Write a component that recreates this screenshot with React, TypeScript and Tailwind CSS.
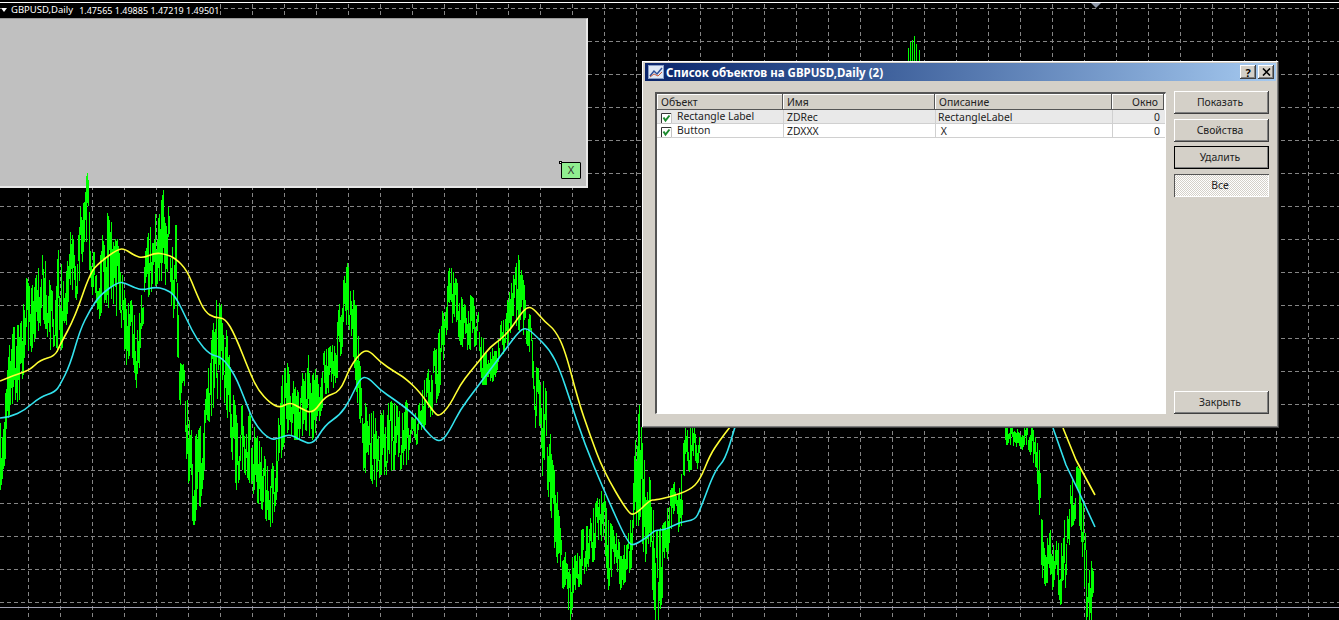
import { FC, ReactNode } from "react";

type Pt = [number, number];

// x, top, bottom of the price noise
const envelope: [number, number, number][] = [
    [0, 423, 490], [4, 405, 470], [9, 345, 415], [13, 327, 400], [18, 325, 403], [22, 320, 390], [25, 272, 345], [30, 290, 355],
    [36, 275, 335], [43, 252, 320], [50, 285, 350], [55, 300, 345], [58, 238, 355], [64, 290, 345], [70, 232, 285], [76, 240, 300],
    [82, 190, 262], [85, 150, 232], [89, 190, 270], [92, 240, 295], [98, 275, 322], [105, 205, 300], [109, 220, 310], [115, 225, 315],
    [120, 260, 320], [126, 305, 365], [131, 300, 350], [137, 330, 395], [141, 295, 340], [146, 240, 300], [152, 220, 290], [160, 205, 280],
    [165, 180, 285], [170, 225, 300], [176, 225, 335], [179, 340, 400], [184, 370, 425], [189, 420, 510], [193, 440, 525], [198, 430, 525],
    [203, 420, 480], [207, 378, 440], [212, 330, 410], [216, 300, 400], [222, 305, 395], [226, 320, 410], [232, 390, 460], [236, 410, 490],
    [242, 405, 470], [248, 410, 480], [255, 430, 500], [262, 450, 510], [270, 475, 535], [276, 440, 500], [282, 375, 450], [288, 360, 430],
    [294, 385, 440], [300, 395, 440], [305, 340, 430], [312, 375, 440], [318, 360, 425], [325, 350, 395], [332, 345, 390], [338, 310, 375],
    [343, 280, 340], [347, 263, 320], [352, 285, 345], [358, 315, 415], [362, 390, 470], [368, 415, 475], [375, 410, 490], [380, 415, 475],
    [386, 405, 475], [392, 400, 470], [400, 410, 470], [406, 400, 465], [412, 420, 450], [420, 400, 440], [426, 370, 425], [432, 355, 415],
    [440, 325, 390], [445, 290, 340], [449, 265, 320], [455, 275, 325], [460, 295, 345], [465, 305, 350], [470, 295, 350], [476, 300, 345],
    [482, 335, 385], [488, 355, 385], [494, 345, 380], [500, 325, 360], [507, 300, 345], [513, 275, 320], [518, 255, 330], [523, 280, 335],
    [530, 315, 355], [534, 365, 420], [540, 370, 470], [547, 395, 490], [552, 460, 525], [556, 480, 570], [561, 540, 585], [566, 550, 600],
    [570, 560, 620], [575, 555, 590], [581, 530, 585], [588, 525, 570], [594, 505, 560], [600, 490, 540], [604, 495, 545], [608, 520, 590],
    [615, 530, 560], [620, 545, 590], [626, 545, 580], [630, 520, 570], [635, 440, 560], [639, 405, 520], [644, 460, 560], [650, 480, 570],
    [655, 530, 620], [659, 530, 620], [665, 520, 575], [670, 490, 535], [675, 480, 505], [680, 490, 550], [684, 427, 480], [690, 427, 470],
    [696, 427, 475], [700, 427, 450],
    [1005, 427, 445], [1012, 427, 445], [1020, 427, 452], [1026, 427, 445], [1032, 427, 460], [1036, 440, 470], [1039, 450, 515], [1042, 520, 590],
    [1046, 540, 585], [1050, 530, 575], [1053, 545, 600], [1057, 540, 590], [1060, 550, 605], [1064, 520, 600], [1068, 490, 550], [1072, 480, 530],
    [1076, 465, 515], [1080, 470, 530], [1083, 500, 570], [1086, 550, 620], [1089, 570, 620], [1092, 552, 620], [1094, 590, 620],
];

const yellowLine: Pt[] = [
    [0, 381], [15, 375], [30, 370], [40, 360], [55, 356], [60, 345], [75, 317], [90, 273], [100, 262], [118, 249], [125, 249],
    [135, 256], [143, 258], [155, 253], [165, 254], [175, 258], [187, 270], [197, 295], [205, 312], [215, 318], [225, 318],
    [235, 335], [250, 373], [258, 390], [270, 403], [280, 408], [290, 402], [300, 408], [313, 414], [325, 396], [340, 392],
    [350, 367], [362, 351], [370, 351], [380, 362], [395, 372], [405, 378], [420, 392], [435, 414], [440, 416], [450, 405],
    [460, 385], [470, 372], [480, 360], [490, 347], [500, 340], [510, 330], [520, 315], [527, 307], [533, 308], [545, 322],
    [555, 330], [565, 350], [578, 400], [590, 435], [603, 470], [628, 513], [635, 515], [650, 500], [655, 500], [670, 497],
    [690, 490], [700, 480], [710, 455], [720, 440], [730, 427],
];

const cyanLine: Pt[] = [
    [0, 418], [10, 417], [25, 410], [40, 397], [55, 392], [60, 385], [70, 365], [80, 330], [90, 310], [100, 295], [118, 282],
    [125, 283], [135, 288], [143, 290], [155, 287], [165, 289], [175, 295], [187, 320], [197, 340], [210, 355], [222, 357],
    [235, 375], [245, 400], [255, 425], [270, 440], [280, 438], [290, 434], [300, 440], [313, 445], [325, 425], [340, 415],
    [350, 400], [360, 378], [368, 377], [380, 390], [395, 400], [415, 415], [425, 430], [435, 440], [442, 441], [450, 430],
    [460, 410], [475, 390], [490, 370], [505, 350], [520, 330], [527, 328], [535, 335], [550, 350], [560, 370], [570, 400],
    [585, 445], [603, 488], [628, 544], [635, 545], [650, 535], [655, 530], [665, 530], [680, 522], [695, 520], [700, 510],
    [715, 470], [725, 460], [735, 427],
];

// same noise on every load
const makeNoise = (): string => {
    let seed = 7919;
    const rnd = () => {
        seed = (seed * 16807) % 2147483647;
        return seed / 2147483647;
    };
    let d = "M912 40V62M908 48V62M916 44V62M919 50V62M914 36V62M910 42V62";
    for (let i = 0; i < envelope.length - 1; i++) {
        const [x0, t0, b0] = envelope[i];
        const [x1, t1, b1] = envelope[i + 1];
        if (x1 - x0 > 100) continue;
        for (let x = x0; x < x1; x++) {
            const k = (x - x0) / (x1 - x0);
            const top = t0 + (t1 - t0) * k;
            const bottom = b0 + (b1 - b0) * k;
            const h = bottom - top;
            const wave = Math.sin(x * 0.85) * 0.5 + 0.5;
            const pos = top + h * (wave * 0.5 + rnd() * 0.5);
            const len = h * (0.3 + rnd() * 0.4);
            const from = Math.max(top, pos - len / 2);
            const to = Math.min(bottom, pos + len / 2);
            d += `M${x + 0.5} ${from.toFixed(0)}V${to.toFixed(0)}`;
            // thin spikes reaching the edges
            if (rnd() < 0.25) d += `M${x + 0.5} ${top.toFixed(0)}V${from.toFixed(0)}`;
            if (rnd() < 0.25) d += `M${x + 0.5} ${to.toFixed(0)}V${bottom.toFixed(0)}`;
        }
    }
    return d;
};

// rounds the corners of a line through its midpoints
const smooth = (pts: Pt[]): string => {
    let d = `M${pts[0][0]} ${pts[0][1]}`;
    for (let i = 1; i < pts.length - 1; i++) {
        const midX = (pts[i][0] + pts[i + 1][0]) / 2;
        const midY = (pts[i][1] + pts[i + 1][1]) / 2;
        d += `Q${pts[i][0]} ${pts[i][1]} ${midX} ${midY}`;
    }
    const last = pts[pts.length - 1];
    return d + `L${last[0]} ${last[1]}`;
};

const gridXs = Array.from({ length: 41 }, (_, i) => 28 + i * 32);
const gridYs = Array.from({ length: 19 }, (_, i) => 8 + i * 33);

const raised = "shadow-[inset_-1px_-1px_#404040,inset_1px_1px_#ffffff,inset_-2px_-2px_#808080]";

const columns = [
    { name: "Объект", width: "w-[126px]" },
    { name: "Имя", width: "w-[152px]" },
    { name: "Описание", width: "w-[177px]" },
    { name: "Окно", width: "w-[52px] justify-end pr-[6px]" },
];

const CheckBox: FC = () => (
    <svg width="11" height="11" viewBox="0 0 11 11" className="ml-[4px] mt-[3px] shrink-0">
        <rect x="0" y="0" width="11" height="11" fill="#ffffff" />
        <path d="M0.5 11V0.5H11" fill="none" stroke="#333333" />
        <path d="M10.5 0V10.5H0" fill="none" stroke="#c4c4c4" />
        <path d="M2.5 4.5L4.5 7.5L8.5 2.5" fill="none" stroke="#1c8a2e" strokeWidth="2" />
    </svg>
);

const ListRow: FC<{ name: string; id: string; desc: string; className: string }> = ({ name, id, desc, className }) => (
    <div className={`flex h-[14px] items-center leading-[15px] border-b border-[#d0d0d0] ${className}`}>
        <div className="flex w-[126px] items-center">
            <CheckBox />
            <span className="ml-[5px]">{name}</span>
        </div>
        <div className="w-[152px] border-l border-[#d0d0d0] pl-[3px] h-full">{id}</div>
        <div className="w-[177px] border-l border-[#d0d0d0] pl-[2px] h-full whitespace-pre">{desc}</div>
        <div className="w-[52px] border-l border-[#d0d0d0] pr-[4px] h-full text-right">0</div>
    </div>
);

const Btn: FC<{ children: ReactNode; className?: string }> = ({ children, className = raised }) => (
    <div className={`flex h-[23px] w-[95px] items-center justify-center pr-[3px] text-[#222] ${className}`}>
        {children}
    </div>
);

const CaptionBtn: FC<{ children: ReactNode }> = ({ children }) => (
    <div className={`flex h-[14px] w-[16px] items-center justify-center bg-[#d4d0c8] ${raised}`}>{children}</div>
);

const App: FC = () => {
    return (
        <div className="relative h-[620px] w-[1339px] overflow-hidden bg-black font-['Noto_Sans',sans-serif] text-[10.4px]">
            {/* grid */}
            <svg width="1339" height="620" className="absolute inset-0">
                <g stroke="#858585" strokeDasharray="4 3" shapeRendering="crispEdges">
                    {gridXs.map((x) => <line key={x} x1={x + 0.5} x2={x + 0.5} y1="4" y2="620" />)}
                    {gridYs.map((y) => <line key={y} x1="0" x2="1339" y1={y + 0.5} y2={y + 0.5} />)}
                </g>
                <line x1="0" x2="1339" y1="2.5" y2="2.5" stroke="#ffffff" shapeRendering="crispEdges" />
                <line x1="0" x2="1339" y1="607.5" y2="607.5" stroke="#a0a0b0" shapeRendering="crispEdges" />
                <path d="M1091 3H1101L1096 8Z" fill="#8f98a8" />
            </svg>

            {/* chart title */}
            <div className="absolute left-[1px] top-[3px] flex h-[14px] items-center whitespace-pre bg-black pr-[1px] text-[9.5px] leading-none text-white">
                <svg width="6" height="4" viewBox="0 0 6 4" className="mr-[4px]">
                    <path d="M0 0H6L3 4Z" fill="#ffffff" />
                </svg>
                <span>GBPUSD,Daily</span>
                <span className="ml-[6px] text-[9px]">1.47565 1.49885 1.47219 1.49501</span>
            </div>

            {/* rectangle label object */}
            <div className="absolute left-0 top-[18px] h-[170px] w-[588px] border-t border-b-2 border-r-2 border-t-[#999999] border-b-[#e8e8e8] border-r-[#e8e8e8] bg-[#c0c0c0]">
                <div className="absolute left-[559px] top-[142px] h-[3px] w-[3px] border border-black bg-white" />
                <div className="absolute left-[561px] top-[143px] flex h-[17px] w-[20px] items-center justify-center rounded-[1px] border border-black bg-[#90ee90] text-[11px] text-[#333]">X</div>
            </div>

            {/* price and moving averages */}
            <svg width="1339" height="620" className="absolute inset-0">
                <path d={makeNoise()} stroke="#00ff00" strokeWidth="1" fill="none" shapeRendering="crispEdges" />
                <g fill="none" strokeWidth="1.6" strokeLinejoin="round">
                    <path d={smooth(yellowLine)} stroke="#ffff33" />
                    <path d={smooth(cyanLine)} stroke="#33e3ee" />
                    <polyline points="1063,428 1076,460 1095,495" stroke="#ffff33" />
                    <polyline points="1053,428 1066,465 1078,490 1095,527" stroke="#33e3ee" />
                </g>
            </svg>

            {/* object list dialog */}
            <div className="absolute left-[642px] top-[61px] flex h-[367px] w-[637px] flex-col bg-[#d4d0c8] px-[3px] pb-[3px] pt-[2px] shadow-[inset_-1px_-1px_#404040,inset_1px_1px_#ffffff,inset_-2px_-2px_#808080]">
                <div className="flex h-[18px] items-center bg-gradient-to-r from-[#0a246a] to-[#a6caf0] pl-[3px] pr-[2px]">
                    <svg width="16" height="14" viewBox="0 0 16 14" className="shrink-0">
                        <rect x="0.5" y="0.5" width="15" height="13" fill="#dfe8f5" stroke="#8aa0c8" />
                        <path d="M2 11L6 6L9 9L14 3" fill="none" stroke="#2d4f9a" strokeWidth="1.5" />
                        <path d="M2 12L6 9L10 11L14 7" fill="none" stroke="#c85a3c" />
                    </svg>
                    <span className="ml-[2px] grow pt-[2px] text-[11.5px] font-bold leading-none text-white">Список объектов на GBPUSD,Daily (2)</span>
                    <div className="flex gap-[2px]">
                        <CaptionBtn><span className="text-[11px] font-bold leading-none text-black">?</span></CaptionBtn>
                        <CaptionBtn>
                            <svg width="9" height="8" viewBox="0 0 9 8"><path d="M1 0.5L8 7.5M8 0.5L1 7.5" stroke="#000000" strokeWidth="1.6" /></svg>
                        </CaptionBtn>
                    </div>
                </div>

                <div className="flex grow pl-[10px] pt-[11px] pb-[11px]">
                    <div className="w-[511px] border-l-2 border-t-2 border-l-[#555555] border-t-[#555555] border-r border-b border-r-[#ffffff] border-b-[#ffffff] bg-white leading-none text-[#222]">
                        <div className="flex h-[16px]">
                            {columns.map((col) => (
                                <div key={col.name} className={`flex items-center bg-[#d4d0c8] pl-[4px] shadow-[inset_-1px_-1px_#555555,inset_1px_1px_#ffffff] ${col.width}`}>
                                    {col.name}
                                </div>
                            ))}
                        </div>
                        <ListRow name="Rectangle Label" id="ZDRec" desc="RectangleLabel" className="bg-[#e9e9e9]" />
                        <ListRow name="Button" id="ZDXXX" desc=" X" className="bg-white" />
                    </div>

                    <div className="-mt-[1px] ml-[8px] flex flex-col gap-[4px]">
                        <Btn className={`mb-[1px] ${raised}`}>Показать</Btn>
                        <Btn>Свойства</Btn>
                        <Btn className={`outline outline-1 -outline-offset-1 outline-black ${raised}`}>Удалить</Btn>
                        <Btn className="mt-[1px] bg-[repeating-conic-gradient(#ffffff_0_25%,#d4d0c8_0_50%)] bg-[length:2px_2px] shadow-[inset_1px_1px_#555555,inset_-1px_-1px_#ffffff]">Все</Btn>
                        <div className="grow" />
                        <Btn>Закрыть</Btn>
                    </div>
                </div>
            </div>
        </div>
    );
};

export default App;
